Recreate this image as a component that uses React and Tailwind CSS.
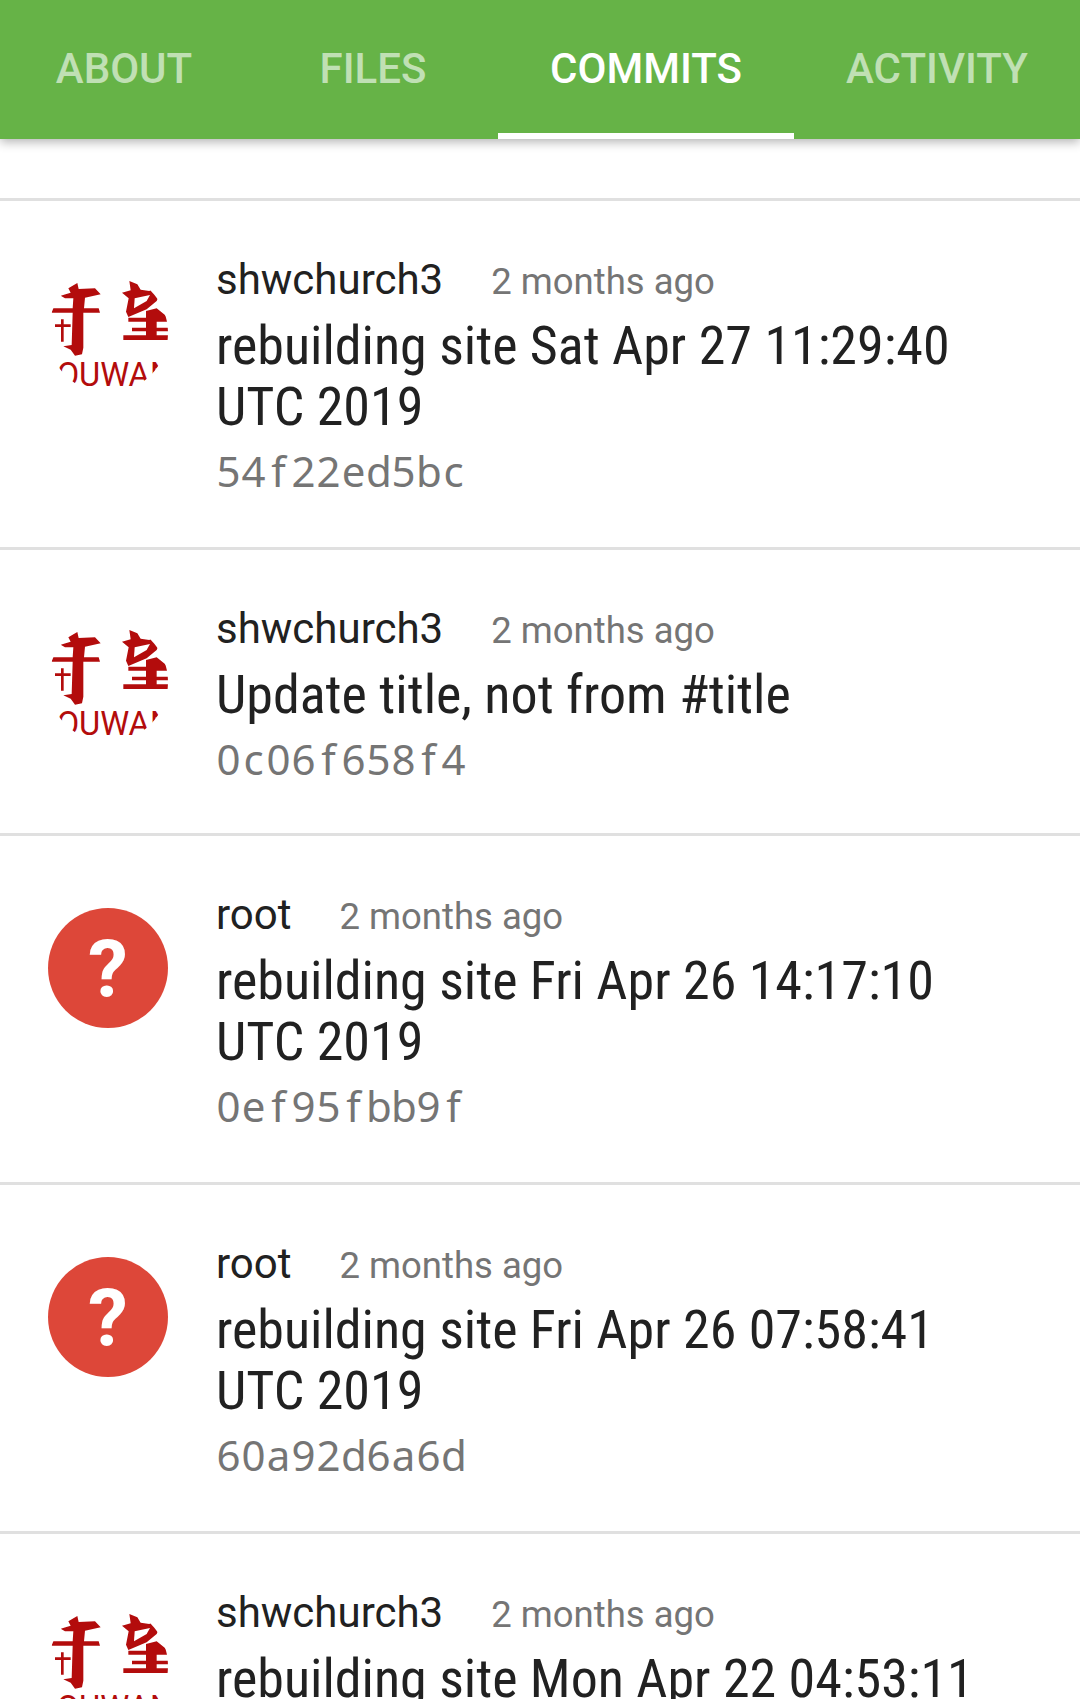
const tabs = [
  { label: "ABOUT" },
  { label: "FILES" },
  { label: "COMMITS", active: true },
  { label: "ACTIVITY" },
];

const commits = [
  { id: 1, author: "shwchurch3", title: ["rebuilding site Sat Apr 27 11:29:40", "UTC 2019"], sha: "54f22ed5bc", logo: true },
  { id: 2, author: "shwchurch3", title: ["Update title, not from #title"], sha: "0c06f658f4", logo: true },
  { id: 3, author: "root", title: ["rebuilding site Fri Apr 26 14:17:10", "UTC 2019"], sha: "0ef95fbb9f" },
  { id: 4, author: "root", title: ["rebuilding site Fri Apr 26 07:58:41", "UTC 2019"], sha: "60a92d6a6d" },
  // last row runs off the bottom of the screen
  { id: 5, author: "shwchurch3", title: ["rebuilding site Mon Apr 22 04:53:11"], sha: "", logo: true },
];

function LogoAvatar() {
  return (
    <div className="w-[120px] h-[120px] shrink-0 rounded-full overflow-hidden">
      <svg viewBox="144 246 360 360" className="w-[120px] h-[120px]" fill="#b30c0c">
        <path d="M205 292 L232 276 L236 294 L285 292 L302 310 L255 320 L252 352 L296 352 L300 365 L250 365 L250 470 L246 490 L225 494 L212 476 L190 466 L215 462 L218 365 L155 365 L158 352 L218 352 L220 322 L195 322 L182 314 L212 305 Z" />
        <path d="M183 385 H191 V400 H212 V408 H191 V452 H183 V408 H165 V400 H183 Z" />
        <path d="M388 270 L412 280 L422 296 L448 300 L462 292 L478 312 L470 330 L440 355 L385 378 L378 362 L386 322 L366 305 L392 298 Z" />
        <path d="M404 322 L450 312 L440 330 L402 352 Z" fill="#fff" />
        <path d="M470 352 L495 372 L500 380 H510 V392 H470 V410 H510 V421 H470 V433 H510 V447 H370 V433 H438 V421 H396 V410 H438 V392 H385 V380 H438 V360 Z" />
        <text x="170" y="584" fontFamily="Roboto, sans-serif" fontSize="98">OUWAN</text>
      </svg>
    </div>
  );
}

function UnknownAvatar() {
  return (
    <div className="w-[120px] h-[120px] shrink-0 rounded-full bg-[#dd4739] flex items-center justify-center pt-[3px] font-['Roboto',sans-serif] font-bold text-white text-[80px] leading-none">
      ?
    </div>
  );
}

function CommitRow({ author, title, sha, logo }) {
  return (
    <div
      className={
        title.length === 1
          ? "flex border-b-[3px] border-[#e0e0e0] pl-12 pr-4 pt-[54px] pb-[49px] gap-12"
          : "flex border-b-[3px] border-[#e0e0e0] pl-12 pr-4 pt-[54px] pb-[51px] gap-12"
      }
    >
      <div className="pt-[18px]">{logo ? <LogoAvatar /> : <UnknownAvatar />}</div>
      <div className="min-w-0">
        <div className="flex items-baseline gap-12 font-['Roboto',sans-serif] h-[50px]">
          <span className="text-[42px] leading-[50px] text-[#212121]">{author}</span>
          <span className="text-[36.5px] leading-[50px] text-[#757575]">2 months ago</span>
        </div>
        <div className="font-['Roboto',sans-serif] [font-stretch:75%] text-[54px] leading-[61px] text-[#212121] mt-[10px]">
          {title.map((line) => (
            <div key={line} className="whitespace-nowrap">{line}</div>
          ))}
        </div>
        <div className="flex font-['Noto_Sans',sans-serif] text-[42px] leading-[50px] text-[#757575] mt-[9px]">
          {sha.split("").map((ch, i) => (
            <span key={i} className="w-[25px] text-center">{ch}</span>
          ))}
        </div>
      </div>
    </div>
  );
}

export default function App() {
  return (
    <div className="w-[1080px] h-[1699px] overflow-hidden bg-white relative">
      <div className="relative z-10 h-[139px] bg-[#66b347] grid grid-cols-[248px_250px_296px_286px] shadow-[0_3px_10px_rgba(0,0,0,0.3)] font-['Roboto',sans-serif] font-medium text-[42px]">
        {tabs.map((t) => (
          <div
            key={t.label}
            className={
              t.active
                ? "flex items-center justify-center pt-1 text-white border-b-[6px] border-white"
                : "flex items-center justify-center pt-1 text-white/60 border-b-[6px] border-transparent"
            }
          >
            {t.label}
          </div>
        ))}
      </div>
      <div className="h-[62px] border-b-[3px] border-[#e0e0e0]" />
      {commits.map((c) => (
        <CommitRow key={c.id} {...c} />
      ))}
    </div>
  );
}
